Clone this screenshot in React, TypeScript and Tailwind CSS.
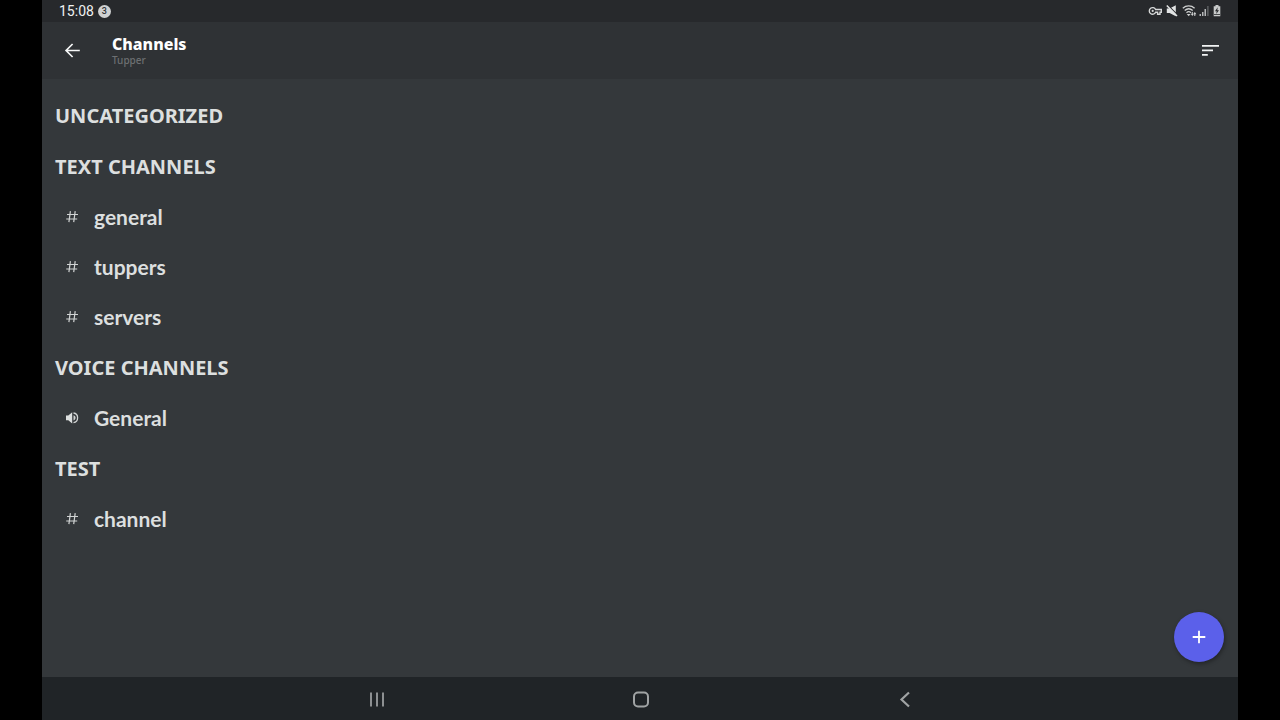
import React from "react";

type Channel = { name: string; kind: "text" | "voice" };
type Category = { name: string; channels: Channel[] };

const categories: Category[] = [
  { name: "UNCATEGORIZED", channels: [] },
  {
    name: "TEXT CHANNELS",
    channels: [
      { name: "general", kind: "text" },
      { name: "tuppers", kind: "text" },
      { name: "servers", kind: "text" },
    ],
  },
  { name: "VOICE CHANNELS", channels: [{ name: "General", kind: "voice" }] },
  { name: "TEST", channels: [{ name: "channel", kind: "text" }] },
];

function HashIcon() {
  return (
    <svg className="size-3.5 shrink-0" viewBox="0 0 14 14" fill="none" stroke="#d0d3d3" strokeWidth="1.2" aria-hidden="true">
      <path d="M5.400 1.200 3.900 12.200M10.200 1.200 8.700 12.200M2 4.500h11M1.200 9h11" />
    </svg>
  );
}

function SpeakerIcon() {
  return (
    <svg className="size-3.5 shrink-0" viewBox="0 0 14 14" fill="none" aria-hidden="true">
      <path d="M1 4.500h2.300L7.200 1.200v11.200L3.300 9.200H1z" fill="#dcdfdf" />
      <path d="M8.500 2c2.400.3 4.100 2.200 4.100 4.800s-1.700 4.500-4.100 4.800" stroke="#d0d3d3" strokeWidth="1.300" />
      <path d="M8.500 4.200c1.400.4 2.100 1.400 2.100 2.600s-.7 2.200-2.100 2.600z" fill="#d0d3d3" />
    </svg>
  );
}

function StatusBar() {
  return (
    <div className="flex h-[22px] items-center justify-between bg-[#27292c] pr-[17px] pl-[17px]">
      <div className="flex items-center gap-1">
        <span className="font-[Roboto,sans-serif] text-[14px] leading-5 text-[#f0f2f2]">15:08</span>
        <span className="flex size-[13px] items-center justify-center rounded-full bg-[#cfd1d1] font-[Roboto,sans-serif] text-[9px] leading-none font-medium text-[#303336]">
          3
        </span>
      </div>
      <div className="flex items-center gap-1" aria-hidden="true">
        <svg className="h-3.5 w-3.5" viewBox="0 0 14 14" fill="none" stroke="#d6d8d8" strokeWidth="1.400">
          <path d="M7.600 5.500A3.300 3.300 0 1 0 7.600 8.300H9.600V10.200H12V8.300H13.300V5.500Z" />
          <circle cx="4.700" cy="6.900" r="1.100" fill="#d6d8d8" stroke="none" />
        </svg>
        <svg className="h-3.5 w-3" viewBox="0 0 12 14">
          <path d="M.8 4.600h2.800L9.800 1.200v11L3.600 8.900H.8z" fill="#e2e4e4" />
          <path d="M1.600 1 11.800 11.200" stroke="#27292c" strokeWidth="1.200" />
          <path d="M.8 1.400 11 11.900" stroke="#e2e4e4" strokeWidth="1.500" />
        </svg>
        <svg className="h-3.5 w-[15px]" viewBox="0 0 15 14" fill="none" stroke="#cfd1d1" strokeWidth="1.300">
          <path d="M.8 4.200c3.400-3 8.400-3 11.800 0M2.700 6.500c2.400-2.100 5.600-2.100 8 0M4.500 8.700c1.300-1.200 3.100-1.200 4.400 0" />
          <path d="m6.700 12.300-1.900-2.300h3.800z" fill="#cfd1d1" stroke="none" />
          <path d="M10.300 7.900v3.200M12.800 8.800V12" strokeWidth="1" />
          <path d="M8.800 9.800h3l-1.500 2.200zM11.300 10.200h3l-1.500-2.200z" fill="#cfd1d1" stroke="none" />
        </svg>
        <svg className="-ml-0.5 h-3.5 w-2.5" viewBox="0 0 10 14">
          <path d="M.5 10h1.500v2H.5zM3 8h1.500v4H3zM5.500 5H7v7H5.500z" fill="#b5b7b8" />
          <path d="M8.300 2h1.200v10H8.300z" fill="#686b6d" />
        </svg>
        <svg className="h-3.5 w-2" viewBox="0 0 8 14">
          <path d="M2.500 1h3v1.200h1.800v10.100H.7V2.200h1.800z" fill="#c9cbcb" />
          <path d="M4.700 3.300 2 7.200h1.700L3.200 10 6 6.200H4.300z" fill="#27292c" />
          <path d="M1 10.500h6" stroke="#27292c" strokeWidth=".8" />
        </svg>
      </div>
    </div>
  );
}

function Toolbar() {
  return (
    <header className="flex h-[57px] items-center bg-[#2f3235] pr-4 pb-0.5 pl-5">
      <button type="button" aria-label="Back" className="flex size-5 items-center justify-center">
        <svg className="size-5" viewBox="0 0 20 20" fill="none" stroke="#f5f7f7" strokeWidth="1.700" aria-hidden="true">
          <path d="M17.800 10.500H4.500M10.600 4 4.100 10.500l6.500 6.500" />
        </svg>
      </button>
      <div className="ml-[30px] flex-1">
        <h1 className="font-['Noto_Sans',sans-serif] text-[16px] leading-5 font-extrabold text-white">Channels</h1>
        <p className="font-['Noto_Sans',sans-serif] text-[10px] leading-3 font-medium text-[#6d7072]">Tupper</p>
      </div>
      <button type="button" aria-label="Sort channels" className="flex size-6 items-center justify-center">
        <svg className="size-6" viewBox="0 0 24 24" fill="#f2f4f4" aria-hidden="true">
          <path d="M4 7h17v1.800H4zM4 11.500h11v1.800H4zM4 16h5.800v1.800H4z" />
        </svg>
      </button>
    </header>
  );
}

function ChannelList() {
  return (
    <div className="flex flex-col pt-[11px] pl-[13px] text-[#dcdfdf]">
      {categories.map((category) => (
        <section key={category.name}>
          <h2 className="flex h-[51px] items-center font-['Noto_Sans',sans-serif] text-[20px] font-bold">{category.name}</h2>
          <ul>
            {category.channels.map((channel) => (
              <li
                key={channel.name}
                className="flex h-[50px] items-center gap-[15px] pl-2.5 font-[Lato,sans-serif] text-[21px] font-bold"
              >
                {channel.kind === "text" ? <HashIcon /> : <SpeakerIcon />}
                <span>{channel.name}</span>
              </li>
            ))}
          </ul>
        </section>
      ))}
    </div>
  );
}

function NavigationBar() {
  return (
    <nav aria-label="System" className="flex h-[43px] items-center justify-center gap-60 bg-[#202427] pl-0.5">
      <button type="button" aria-label="Recent apps" className="size-6">
        <svg viewBox="0 0 24 24" fill="none" stroke="#8d9092" strokeWidth="2" aria-hidden="true">
          <path d="M6 5.500v14M12 5.500v14M18 5.500v14" />
        </svg>
      </button>
      <button type="button" aria-label="Home" className="size-6">
        <svg viewBox="0 0 24 24" fill="none" stroke="#a0a3a4" strokeWidth="2" aria-hidden="true">
          <rect x="5" y="5.500" width="14" height="14" rx="4" />
        </svg>
      </button>
      <button type="button" aria-label="Back" className="size-6">
        <svg viewBox="0 0 24 24" fill="none" stroke="#a0a3a4" strokeWidth="2.200" aria-hidden="true">
          <path d="m16 5.500-7.500 7 7.500 7" />
        </svg>
      </button>
    </nav>
  );
}

export default function App() {
  return (
    <div className="min-h-screen bg-black px-[42px]">
      <div className="flex min-h-screen flex-col bg-[#34383b]">
        <StatusBar />
        <Toolbar />
        <main className="relative flex-1">
          <ChannelList />
          <button
            type="button"
            aria-label="Create channel"
            className="absolute right-3.5 bottom-[15px] flex size-[50px] items-center justify-center rounded-full bg-[#5b60ea] shadow-[1px_2px_4px_rgba(0,0,0,0.35)]"
          >
            <svg className="size-4" viewBox="0 0 16 16" stroke="#ffffff" strokeWidth="1.800" aria-hidden="true">
              <path d="M8 1.700v12.600M1.700 8h12.600" />
            </svg>
          </button>
        </main>
        <NavigationBar />
      </div>
    </div>
  );
}
